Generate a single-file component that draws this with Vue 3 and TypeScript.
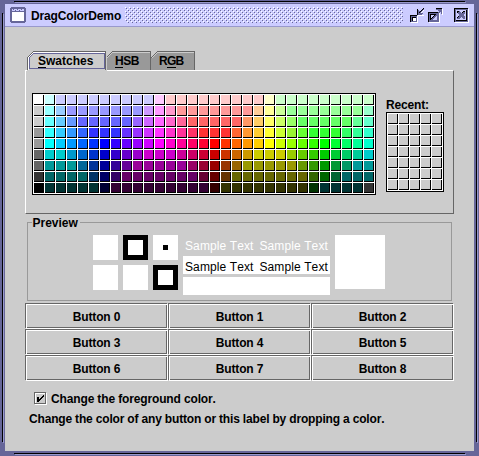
<script setup lang="ts">
import { ref } from 'vue'

type Run = [color: string, count: number]

const swatchRows: Run[][] = [
  [['fff', 1], ['cff', 1], ['ccf', 9], ['fcf', 1], ['fcc', 9], ['ffc', 1], ['cfc', 9]],
  [['ccc', 1], ['9ff', 1], ['9cf', 1], ['99f', 7], ['c9f', 1], ['f9f', 1], ['f9c', 1], ['f99', 7], ['fc9', 1], ['ff9', 1], ['cf9', 1], ['9f9', 7], ['9fc', 1]],
  [['ccc', 1], ['6ff', 1], ['6cf', 1], ['69f', 1], ['66f', 5], ['96f', 1], ['c6f', 1], ['f6f', 1], ['f6c', 1], ['f69', 1], ['f66', 5], ['f96', 1], ['fc6', 1], ['ff6', 1], ['cf6', 1], ['9f6', 1], ['6f6', 5], ['6f9', 1], ['6fc', 1]],
  [['999', 1], ['3ff', 1], ['3cf', 1], ['39f', 1], ['36f', 1], ['33f', 3], ['63f', 1], ['93f', 1], ['c3f', 1], ['f3f', 1], ['f3c', 1], ['f39', 1], ['f36', 1], ['f33', 3], ['f63', 1], ['f93', 1], ['fc3', 1], ['ff3', 1], ['cf3', 1], ['99f433', 1], ['6f3', 1], ['3f3', 3], ['3f6', 1], ['3f9', 1], ['3fc', 1]],
  [['999', 1], ['0ff', 1], ['0cf', 1], ['09f', 1], ['06f', 1], ['03f', 1], ['00f', 1], ['30f', 1], ['60f', 1], ['90f', 1], ['c0f', 1], ['f0f', 1], ['f0c', 1], ['f09', 1], ['f06', 1], ['f03', 1], ['f00', 1], ['f30', 1], ['f60', 1], ['f90', 1], ['fc0', 1], ['ff0', 1], ['cf0', 1], ['9f0', 1], ['6f0', 1], ['3f0', 1], ['0f0', 1], ['0f3', 1], ['0f6', 1], ['0f9', 1], ['0fc', 1]],
  [['666', 1], ['0cc', 2], ['09c', 1], ['06c', 1], ['03c', 1], ['00c', 1], ['30c', 1], ['60c', 1], ['90c', 1], ['c0c', 3], ['c09', 1], ['c06', 1], ['c03', 1], ['c00', 1], ['c30', 1], ['c60', 1], ['c90', 1], ['cc0', 3], ['9c0', 1], ['6c0', 1], ['3c0', 1], ['0c0', 1], ['0c3', 1], ['0c6', 1], ['0c9', 1], ['0cc', 1]],
  [['666', 1], ['099', 3], ['069', 1], ['039', 1], ['009', 1], ['309', 1], ['609', 1], ['909', 5], ['906', 1], ['903', 1], ['900', 1], ['930', 1], ['960', 1], ['990', 5], ['690', 1], ['390', 1], ['090', 1], ['093', 1], ['096', 1], ['099', 2]],
  [['333', 1], ['066', 4], ['036', 1], ['006', 1], ['306', 1], ['606', 7], ['603', 1], ['600', 1], ['630', 1], ['660', 7], ['360', 1], ['060', 1], ['063', 1], ['066', 3]],
  [['000', 1], ['033', 5], ['003', 1], ['303', 9], ['300', 1], ['330', 8], ['030', 1], ['033', 4], ['333', 1]],
]
const swatches: string[] = swatchRows.flatMap(row => row.flatMap(([c, n]) => Array<string>(n).fill('#' + c)))

const buttons = Array.from({ length: 9 }, (_, i) => `Button ${i}`)
const foreground = ref(true)
</script>

<template>
  <div class="window">
    <header class="titlebar">
      <svg class="app-icon" width="16" height="16" shape-rendering="crispEdges">
        <path fill="#669" d="M1 0h14v1h1v14h-1v1H1v-1H0V1h1z" />
        <path fill="#ccf" d="M2 2h12v2H2z" />
        <path fill="#669" d="M3 2h1v1H3zM5 3h1v1H5zM7 2h1v1H7zM9 3h1v1H9zM11 2h1v1h-1z" />
        <path fill="#fff" d="M2 5h12v9H2z" />
      </svg>
      <h1>DragColorDemo</h1>
      <svg class="bumps" width="278" height="16" shape-rendering="crispEdges">
        <defs>
          <pattern id="bump" width="4" height="4" patternUnits="userSpaceOnUse">
            <path fill="#fff" d="M0 0h1v1H0zM2 2h1v1H2z" />
            <path fill="#669" d="M1 1h1v1H1zM3 3h1v1H3z" />
          </pattern>
        </defs>
        <rect width="278" height="16" fill="url(#bump)" />
      </svg>
      <div class="controls">
        <svg width="16" height="16" shape-rendering="crispEdges">
          <path fill="#fff" d="M1 8h7v7H1zM8 7h6v1H8zM13 2h1v1h-1v1h-1v1h-1V4h1V3h1z" />
          <path fill="#000" d="M0 7h7v7H0z" />
          <path fill="#669" d="M1 8h6v6H1z" />
          <path fill="#000" d="M2 9h4v4H2z" />
          <path fill="#fff" d="M3 10h3v3H3z" />
          <path fill="#669" d="M8 2h1v1h1v1h1V3h1V2h1V1h1v1h-1v1h-1v1h-1v1h2v1h-1v1H8z" />
          <path fill="#000" d="M7 1h1v6H7zM9 4h1V3h1V2h1V1h1V0h1v1h-1v1h-1v1h-1v1h-1v1H9z" />
        </svg>
        <svg width="16" height="16" shape-rendering="crispEdges">
          <path fill="#fff" d="M1 5h11v10H1zM9 1h6v6h-1V2H9z" />
          <path fill="#000" d="M0 4h11v10H0z" />
          <path fill="#669" d="M1 5h10v9H1z" />
          <path fill="#000" d="M2 6h7v1H3v5H2z" />
          <path fill="#ccf" d="M3 7h6v5H3z" />
          <path fill="#669" d="M3 11h1v-1h1V9h1V8h1V7h1V6h1V5h1V4h1V3h-1V2H8V1h6v5h-1V4h-1v1h-1v1h-1v1H9v1H8v1H7v1H6v1H5v1H3z" />
          <path fill="#000" d="M8 0h6v1H8zM3 10h1V9h1V8h1V7h1V6h1v1H7v1H6v1H5v1H4v1H3z" />
        </svg>
        <svg class="close" width="16" height="16" shape-rendering="crispEdges">
          <path fill="#fff" d="M1 1h14v14H1z" />
          <path fill="#000" d="M0 0h14v14H0z" />
          <path fill="#669" d="M1 1h13v13H1z" />
          <path fill="#000" d="M2 2h11v11H2z" />
          <path fill="#ccf" d="M2 2h10v10H2z" />
          <path fill="#669" d="M3 3h2l2 2 2-2h2v2L9 7l2 2v2H9L7 9l-2 2H3V9l2-2-2-2z" />
          <path fill="#000" d="M3 3h2v1H4v1H3zM9 3h2v1H9zM3 9h1v1H3zM8 4h1v1H8zM4 8h1v1H4z" />
        </svg>
      </div>
    </header>

    <main>
      <nav class="tabs">
        <button class="tab active">
          <svg width="80" height="20" shape-rendering="crispEdges">
            <path fill="#666" d="M6 0h73v1H6zM5 1h1v1H5zM4 2h1v1H4zM3 3h1v1H3zM2 4h1v1H2zM1 5h1v1H1zM0 6h1v13H0zM78 0h1v19h-1z" />
            <path fill="#fff" d="M6 1h72v1H6zM5 2h1v1H5zM4 3h1v1H4zM3 4h1v1H3zM2 5h1v1H2zM1 6h1v13H1z" />
            <path fill="none" stroke="#669" d="M2.500 17.500V6.500L6.500 2.500H77.500V17.500z" />
          </svg>
          <span><u>S</u>watches</span>
        </button>
        <button class="tab hsb">
          <svg width="45" height="19" shape-rendering="crispEdges">
            <path fill="#999" d="M6 0h39v19H0V6z" />
            <path fill="#666" d="M6 0h39v19h-1V1H6zM5 1h1v1H5zM4 2h1v1H4zM3 3h1v1H3zM2 4h1v1H2zM1 5h1v1H1zM0 6h1v1H0z" />
            <path fill="#ccc" d="M6 1h38v1H6zM5 2h1v1H5zM4 3h1v1H4zM3 4h1v1H3zM2 5h1v1H2zM1 6h1v1H1z" />
          </svg>
          <span><u>H</u>SB</span>
        </button>
        <button class="tab rgb">
          <svg width="44" height="19" shape-rendering="crispEdges">
            <path fill="#999" d="M6 0h38v19H0V6z" />
            <path fill="#666" d="M6 0h38v19h-1V1H6zM5 1h1v1H5zM4 2h1v1H4zM3 3h1v1H3zM2 4h1v1H2zM1 5h1v1H1zM0 6h1v1H0z" />
            <path fill="#ccc" d="M6 1h37v1H6zM5 2h1v1H5zM4 3h1v1H4zM3 4h1v1H3zM2 5h1v1H2zM1 6h1v1H1z" />
          </svg>
          <span>R<u>G</u>B</span>
        </button>
      </nav>

      <section class="chooser">
        <div class="grid palette">
          <i v-for="(c, i) in swatches" :key="i" :style="{ backgroundColor: c }"></i>
        </div>
        <div class="recent">
          <label>Recent:</label>
          <div class="grid history"><i v-for="n in 35" :key="n"></i></div>
        </div>
      </section>

      <fieldset class="preview">
        <legend>Preview</legend>
        <div class="squares">
          <b></b><b class="ring"></b><b class="dot"></b>
          <b></b><b></b><b class="ring"></b>
        </div>
        <div class="samples">
          <p class="light"><span>Sample Text</span><span>Sample Text</span></p>
          <p class="dark"><span>Sample Text</span><span>Sample Text</span></p>
          <p class="blank"></p>
        </div>
        <div class="block"></div>
      </fieldset>

      <section class="buttons">
        <button v-for="b in buttons" :key="b">{{ b }}</button>
      </section>

      <label class="check" @click="foreground = !foreground">
        <svg width="13" height="13" shape-rendering="crispEdges">
          <path fill="#fff" d="M1 1h12v12H1z" />
          <path fill="#666" d="M0 0h12v12H0z" />
          <path fill="#fff" d="M1 1h10v10H1z" />
          <path fill="#ccc" d="M2 2h9v9H2z" />
          <path v-if="foreground" fill="#000" d="M3 5h2v2h1V6h1V5h1V4h1V3h1v2H9v1H8v1H7v1H6v1H5v1H3z" />
        </svg>
        <span>Change the foreground color.</span>
      </label>
      <p class="hint">Change the color of any button or this label by dropping a color.</p>
    </main>
  </div>
</template>

<style>
body {
  margin: 0;
  background: #669;
}
</style>

<style scoped>
.window {
  box-sizing: border-box;
  width: 479px;
  height: 456px;
  padding: 4px 5px 5px;
  font: bold 12px/14px "Liberation Sans", Arial, sans-serif;
  font-kerning: none;
  color: #000;
  background-color: #669;
  background-image:
    linear-gradient(#000, #000), linear-gradient(#99c, #99c),
    linear-gradient(#000, #000), linear-gradient(#99c, #99c),
    linear-gradient(#000, #000), linear-gradient(#99c, #99c),
    linear-gradient(#000, #000), linear-gradient(#99c, #99c);
  background-repeat: no-repeat;
  background-size:
    451px 1px, 451px 1px, 451px 1px, 451px 1px,
    1px 429px, 1px 429px, 1px 429px, 1px 429px;
  background-position:
    14px 1px, 15px 2px, 14px 453px, 15px 454px,
    2px 13px, 3px 14px, 476px 13px, 477px 14px;
}
svg { display: block; flex: none; }
.titlebar {
  display: flex;
  align-items: flex-start;
  box-sizing: border-box;
  height: 23px;
  padding: 3px 4px 0 5px;
  background: #ccf;
  border-bottom: 1px solid #99c;
}
h1 {
  margin: 2px 0 0 5px;
  width: 95px;
  font: inherit;
  letter-spacing: -0.15px;
}
.controls {
  display: flex;
  gap: 2px;
  padding: 1px 0 0 7px;
}
.close { margin-left: 8px; }
main {
  height: 424px;
  box-sizing: border-box;
  padding: 24px 20px 0;
  background: #ccc;
}
button {
  padding: 0;
  border: 0;
  background: none;
  color: inherit;
  font: inherit;
  font-kerning: none;
}
.tabs { display: flex; height: 19px; padding-left: 2px; }
.tab { display: grid; height: 19px; text-align: left; }
.tab > * { grid-area: 1 / 1; }
.tab span { padding: 3px 0 0 11px; }
.tab u {
  text-decoration: none;
  box-shadow: inset 0 -1px #000;
}
.tab.active { width: 79px; position: relative; }
.tab.active svg { background: #ccc; }
.hsb span { padding-left: 9px; letter-spacing: -0.5px; }
.rgb span { padding-left: 8px; letter-spacing: -0.7px; }
.chooser {
  display: flex;
  box-sizing: border-box;
  width: 429px;
  height: 144px;
  padding: 22px 0 0 6px;
  border: solid;
  border-width: 1px;
  border-color: #fff #666 #666 #fff;
}
.grid {
  display: grid;
  gap: 1px;
  padding: 1px;
  border: 1px solid #000;
  background: #fff;
}
.grid i {
  box-sizing: border-box;
  width: 10px;
  height: 10px;
  border: solid #000;
  border-width: 0 1px 1px 0;
}
.palette {
  grid-template-columns: repeat(31, 10px);
  height: 98px;
}
.recent { margin: 5px 0 0 10px; }
.recent label {
  display: block;
  height: 14px;
  letter-spacing: -0.15px;
}
.history { grid-template-columns: repeat(5, 10px); }
.history i { background: #ccc; }
.preview {
  position: relative;
  display: flex;
  box-sizing: border-box;
  width: 425px;
  height: 79px;
  margin: 8px 0 2px 2px;
  padding: 12px 0 0 65px;
  border: 1px solid #999;
}
.preview legend {
  position: absolute;
  top: -7px;
  left: 4px;
  width: 48px;
  padding: 0 0 0 0.5px;
  box-sizing: border-box;
  background: #ccc;
}
.squares {
  display: grid;
  grid-template-columns: repeat(3, 25px);
  grid-auto-rows: 25px;
  gap: 5px;
  align-content: start;
}
.squares b { background: #fff; box-sizing: border-box; }
.squares .ring { border: 5px solid #000; }
.squares .dot { border: 10px solid #fff; background: #000; }
.samples { width: 147px; margin: 0 5px; font-weight: normal; }
.samples p {
  display: flex;
  gap: 6px;
  box-sizing: border-box;
  height: 18px;
  margin: 0 0 3px;
  padding: 4px 0 0 2px;
  letter-spacing: 0.1px;
  white-space: nowrap;
}
.light { color: #fff; }
.dark, .blank { background: #fff; }
.block { width: 50px; height: 54px; background: #fff; }
.buttons {
  display: grid;
  grid-template-columns: repeat(3, 143px);
  grid-auto-rows: 26px;
}
.buttons button {
  position: relative;
  box-sizing: border-box;
  margin: 0 1px 1px 0;
  border: 1px solid #666;
  padding: 2px 0 0 1px;
  letter-spacing: -0.15px;
}
.buttons button::after {
  content: "";
  position: absolute;
  inset: 0 -2px -2px 0;
  border: 1px solid #fff;
}
.check {
  display: flex;
  gap: 4px;
  margin: 11px 0 0 9px;
  letter-spacing: -0.14px;
}
.hint {
  margin: 6px 0 0 4px;
  white-space: nowrap;
  letter-spacing: -0.175px;
}
</style>
